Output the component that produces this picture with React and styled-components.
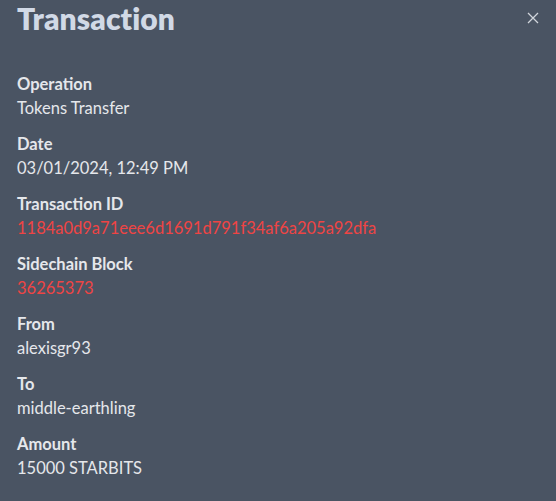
import React from "react";
import styled, { createGlobalStyle } from "styled-components";

const Global = createGlobalStyle`
  html, body { margin: 0; padding: 0; background: #4a5463; }
  body { font-family: "Lato", "Open Sans", sans-serif; }
`;

const Panel = styled.div`
  width: 556px;
  height: 501px;
  background: #4a5463;
  box-sizing: border-box;
  padding: 0 17px;
  color: #e5e7eb;
  overflow: hidden;
`;

const Header = styled.div`
  display: flex;
  justify-content: space-between;
  align-items: center;
  height: 40px;
  margin-top: -2px;
`;

const Title = styled.h2`
  margin: 0;
  font-size: 30px;
  font-weight: 800;
  color: #d1d9e6;
  letter-spacing: 0.1px;
`;

const Close = styled.button`
  background: none;
  border: none;
  padding: 0;
  margin-right: -1px;
  width: 14px;
  height: 14px;
  display: flex;
  align-items: center;
  justify-content: center;
  color: #d1d5db;
  cursor: pointer;
`;

const List = styled.div`
  display: flex;
  flex-direction: column;
  gap: 12px;
  margin-top: 34px;
`;

const Field = styled.div`
  display: flex;
  flex-direction: column;
`;

const Label = styled.div`
  font-size: 16.5px;
  font-weight: 700;
  line-height: 24px;
  color: #e5e7eb;
`;

const Value = styled.div`
  font-size: 16.5px;
  line-height: 24px;
  color: ${(p) => (p.$link ? "#ef4444" : "#e5e7eb")};
`;

const fields = [
  ["Operation", "Tokens Transfer"],
  ["Date", "03/01/2024, 12:49 PM"],
  ["Transaction ID", "1184a0d9a71eee6d1691d791f34af6a205a92dfa", true],
  ["Sidechain Block", "36265373", true],
  ["From", "alexisgr93"],
  ["To", "middle-earthling"],
  ["Amount", "15000 STARBITS"],
];

export default function App() {
  return (
    <>
      <Global />
      <Panel>
        <Header>
          <Title>Transaction</Title>
          <Close aria-label="Close">
            <svg width="12" height="12" viewBox="0 0 12 12">
              <path d="M1 1L11 11M11 1L1 11" stroke="currentColor" strokeWidth="1.3" />
            </svg>
          </Close>
        </Header>
        <List>
          {fields.map(([l, v, link]) => (
            <Field key={l}>
              <Label>{l}</Label>
              <Value $link={link}>{v}</Value>
            </Field>
          ))}
        </List>
      </Panel>
    </>
  );
}
